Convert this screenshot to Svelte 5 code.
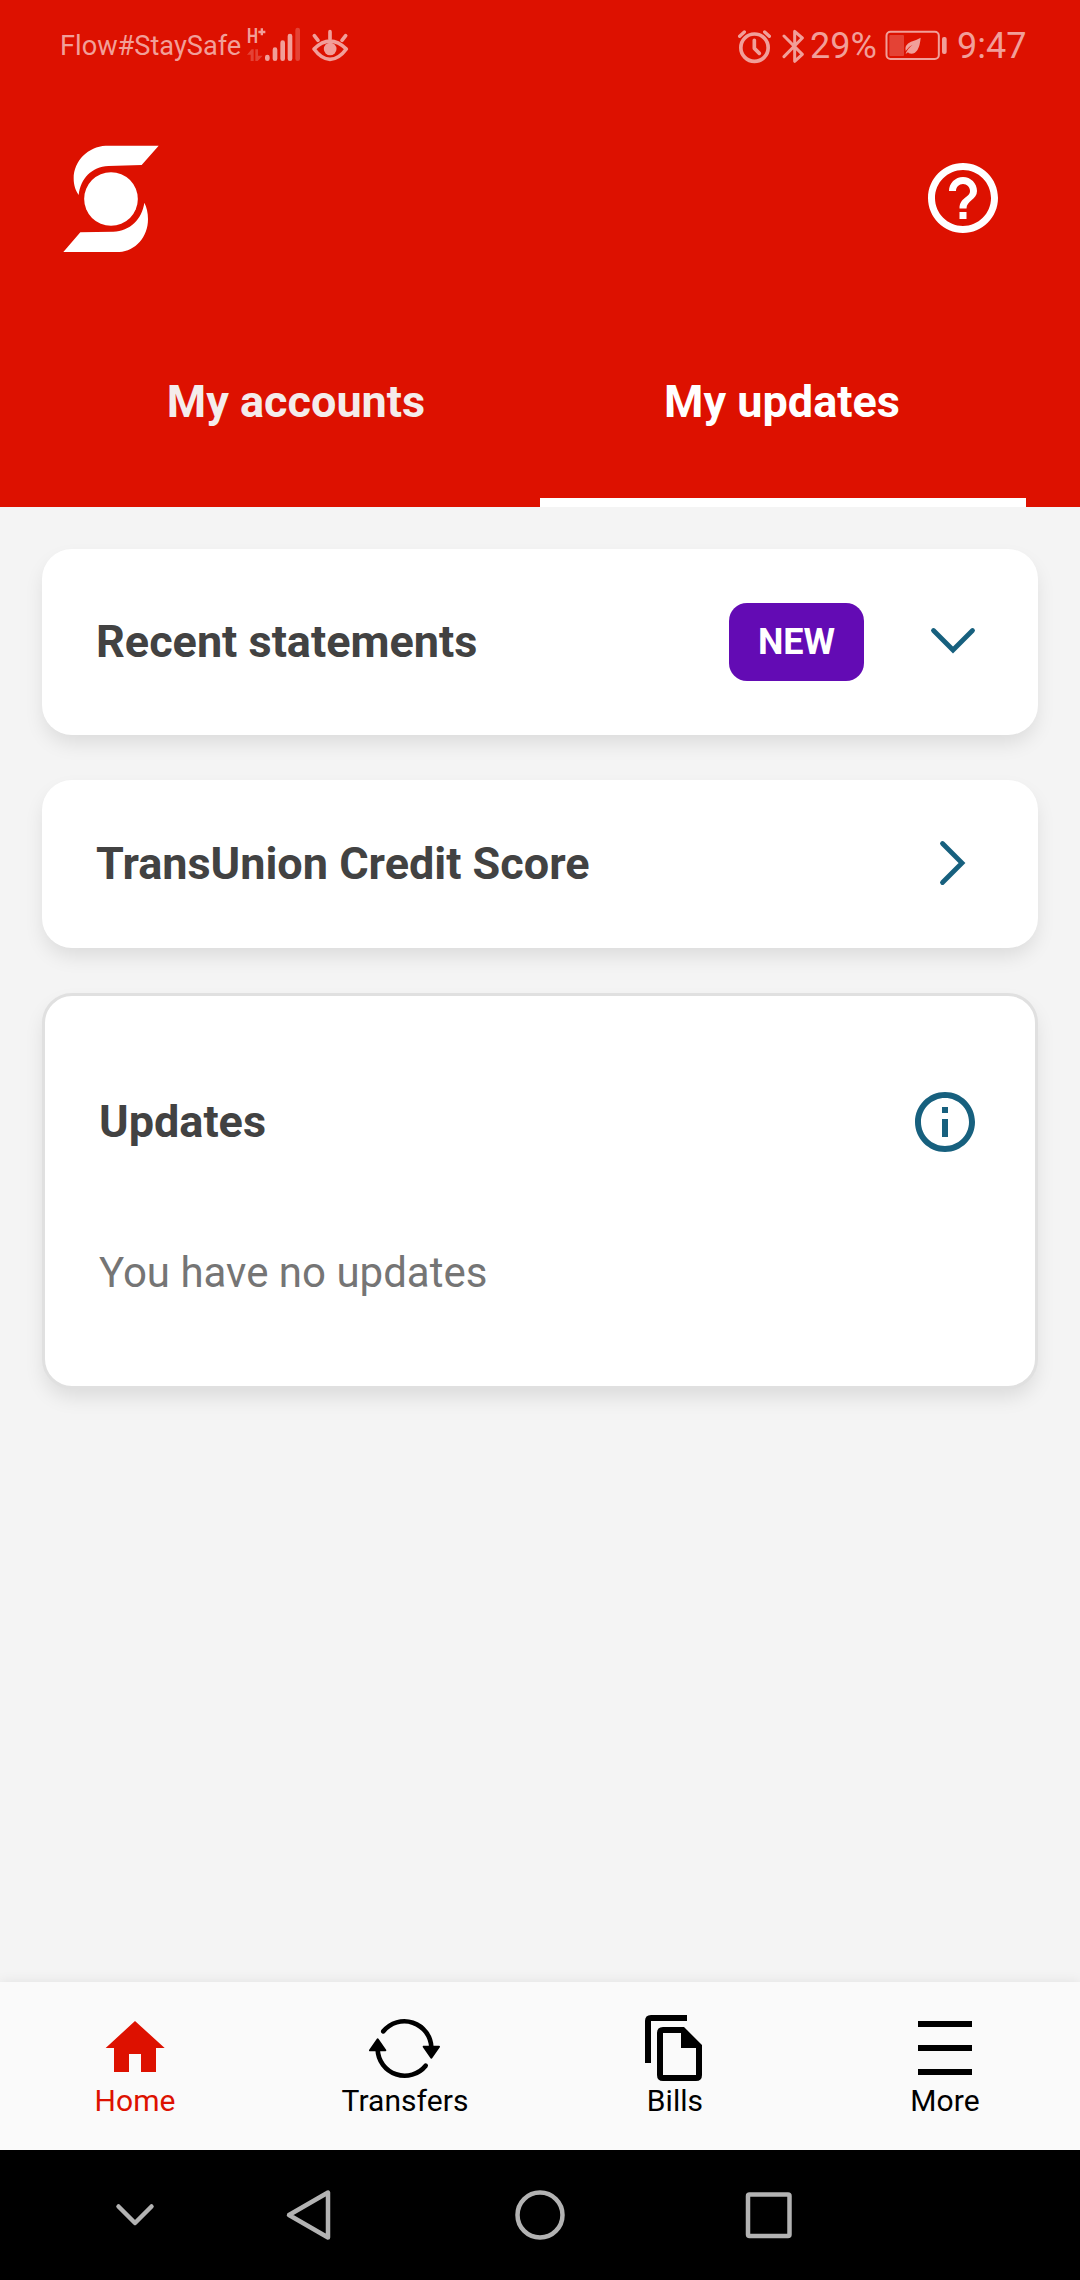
<script>
  const tabs = [
    { label: 'My accounts', active: false },
    { label: 'My updates', active: true }
  ];
</script>

<div class="screen">
  <header>
    <div class="status">
      <span class="carrier">Flow#StaySafe</span>
      <svg class="signal" viewBox="618 36 165 132">
        <text x="0" y="0" transform="translate(621 98) scale(.78 1)" font-size="60" font-weight="700">H</text>
        <path d="M655 66h21M665.500 55v21" stroke="currentColor" stroke-width="7" />
        <path class="dim" d="M621 134l14-16h6v35h-9v-19zM646 118h8v19h14l-15 16h-7z" />
        <g stroke="currentColor" stroke-width="14" stroke-linecap="round">
          <path d="M682 141v5M705 119v27M728 98v48M750 78v68" />
          <path class="dim" d="M773 60v86" />
        </g>
      </svg>
      <svg class="eye" viewBox="813 57 114 99">
        <path d="M822 117Q870 70 919 117Q896 148 870 148Q845 148 822 117Z" fill="none" stroke="currentColor" stroke-width="11" stroke-linejoin="round" />
        <circle cx="870.500" cy="117" r="19" />
        <path d="M870 65v22M823 77l11 14M917 77l-11 14" stroke="currentColor" stroke-width="11" stroke-linecap="round" />
      </svg>
      <svg class="alarm" viewBox="51 54 105 105">
        <circle cx="103.500" cy="110" r="41" fill="none" stroke="currentColor" stroke-width="11" />
        <path d="M103 88v24l15 15" fill="none" stroke="currentColor" stroke-width="11" stroke-linecap="round" stroke-linejoin="round" />
        <path d="M59 76l14-13M148 76l-14-13" stroke="currentColor" stroke-width="10" stroke-linecap="round" />
      </svg>
      <svg class="bluetooth" viewBox="186 51 69 111">
        <path d="M192 75L247 130L224 151V61L247 81L192 137" fill="none" stroke="currentColor" stroke-width="9" stroke-linejoin="round" stroke-linecap="round" />
      </svg>
      <span class="percent">29%</span>
      <svg class="battery" viewBox="495 60 189 93">
        <rect x="499.500" y="65" width="157" height="82" rx="12" fill="none" stroke="currentColor" stroke-width="6" />
        <rect class="dim" x="508" y="75" width="44" height="63" rx="3" />
        <rect x="666" y="81" width="14" height="51" rx="6" />
        <path d="M602 83Q598 130 574 131Q565 131 564 127L557 132Q560 118 578 104Q566 109 557 123Q552 105 573 95Q588 91 602 83Z" />
      </svg>
      <span class="clock">9:47</span>
    </div>

    <div class="brand">
      <svg class="logo" viewBox="66 72 294 330">
        <path d="M197 77H356L305 135L205 138C155 141 122 175 116 225C107 212 101 197 101 175C101 122 145 80 197 77Z" />
        <circle cx="213" cy="237" r="80.500" />
        <path d="M70 396L121 337L220 335C270 333 306 298 313 248C320 262 324 277 324 297C324 352 286 393 238 396Z" />
      </svg>
      <svg class="help" viewBox="0 0 24 24">
        <path d="M11 18h2v-2h-2v2zm1-16C6.480 2 2 6.480 2 12s4.480 10 10 10 10-4.480 10-10S17.520 2 12 2zm0 18c-4.410 0-8-3.590-8-8s3.590-8 8-8 8 3.590 8 8-3.590 8-8 8zm0-14c-2.210 0-4 1.790-4 4h2c0-1.100.900-2 2-2s2 .900 2 2c0 2-3 1.750-3 5h2c0-2.250 3-2.500 3-5 0-2.210-1.790-4-4-4z" />
      </svg>
    </div>

    <div class="tabs">
      {#each tabs as tab}
        <div class="tab" class:active={tab.active}>{tab.label}</div>
      {/each}
    </div>
  </header>

  <main>
    <section class="card statements">
      <h2>Recent statements</h2>
      <span class="badge">NEW</span>
      <svg class="chevron" viewBox="0 0 48 48"><path d="M4.500 12.500L24 32L43.500 12.500" /></svg>
    </section>
    <section class="card score">
      <h2>TransUnion Credit Score</h2>
      <svg class="chevron" viewBox="0 0 48 48"><path d="M13.500 3.500L33 23L13.500 42.500" /></svg>
    </section>
    <section class="card updates">
      <div class="row">
        <h2>Updates</h2>
        <svg class="info" viewBox="0 0 24 24">
          <path d="M11 7h2v2h-2zm0 4h2v6h-2zm1-9C6.480 2 2 6.480 2 12s4.480 10 10 10 10-4.480 10-10S17.520 2 12 2zm0 18c-4.410 0-8-3.590-8-8s3.590-8 8-8 8 3.590 8 8-3.590 8-8 8z" />
        </svg>
      </div>
      <p>You have no updates</p>
    </section>
  </main>

  <nav>
    <div class="item current">
      <svg viewBox="117 126 216 216"><path d="M225 153L314 234H288V306H243V252H207V306H162V234H137Z" /></svg>
      <span>Home</span>
    </div>
    <div class="item">
      <svg viewBox="927 126 216 216">
        <g fill="none" stroke="currentColor" stroke-width="14" stroke-linecap="round">
          <path d="M970 184A81 81 0 0 1 1114 232" />
          <path d="M1097 287A81 81 0 0 1 953 239" />
        </g>
        <g stroke="currentColor" stroke-width="6" stroke-linejoin="round">
          <path d="M1091 230H1137L1114 263Z" />
          <path d="M930 241H976L953 208Z" />
        </g>
      </svg>
      <span>Transfers</span>
    </div>
    <div class="item">
      <svg viewBox="117 126 216 216">
        <path d="M135 279V153Q135 135 153 135H261V153H153V279Z" />
        <path fill-rule="evenodd" d="M189 171H252L306 225V315Q306 333 288 333H189Q171 333 171 315V189Q171 171 189 171ZM189 189V315H288V234H243V189Z" />
      </svg>
      <span>Bills</span>
    </div>
    <div class="item">
      <svg viewBox="927 126 216 216"><path d="M954 153h162v18H954zM954 225h162v18H954zM954 297h162v18H954z" /></svg>
      <span>More</span>
    </div>
  </nav>

  <footer>
    <svg viewBox="0 0 60 60"><path d="M13.500 21.500L30 38L46.500 21.500" /></svg>
    <svg viewBox="0 0 60 60"><path d="M10 30L49 7.500V52.500Z" /></svg>
    <svg viewBox="0 0 60 60"><circle cx="30" cy="30" r="22.500" /></svg>
    <svg viewBox="0 0 60 60"><rect x="9" y="9.500" width="41.500" height="41.500" rx="1.500" /></svg>
  </footer>
</div>

<style>
  :global(body) {
    margin: 0;
  }
  .screen {
    width: 1080px;
    height: 2280px;
    display: flex;
    flex-direction: column;
    background: #f4f4f4;
    font-family: Roboto, 'Liberation Sans', sans-serif;
    overflow: hidden;
  }
  svg {
    display: block;
    flex: none;
    fill: currentColor;
  }
  header {
    height: 507px;
    flex: none;
    background: #dd1100;
    color: #fff;
  }
  .status {
    height: 92px;
    box-sizing: border-box;
    padding-left: 60px;
    display: flex;
    align-items: center;
    color: #f19f99;
    white-space: nowrap;
  }
  .dim {
    opacity: 0.35;
  }
  .carrier {
    width: 186px;
    font-size: 27.2px;
  }
  .signal {
    width: 55px;
    height: 44px;
    margin-top: -4px;
    overflow: visible;
  }
  .eye {
    width: 38px;
    height: 33px;
    margin: -1px 0 0 10px;
  }
  .alarm {
    width: 35px;
    height: 35px;
    margin-left: 388px;
  }
  .bluetooth {
    width: 23px;
    height: 37px;
    margin-left: 10px;
  }
  .percent {
    width: 75px;
    margin-left: 5px;
    font-size: 36px;
  }
  .battery {
    width: 63px;
    height: 31px;
    margin-top: -1px;
  }
  .clock {
    margin-left: 9px;
    font-size: 36px;
  }
  .brand {
    height: 212px;
    box-sizing: border-box;
    padding: 0 75px 0 62px;
    display: flex;
    align-items: center;
    justify-content: space-between;
  }
  .logo {
    width: 98px;
    height: 110px;
    margin-top: 2px;
  }
  .help {
    width: 84px;
    height: 84px;
  }
  .tabs {
    height: 203px;
    padding: 0 54px;
    display: grid;
    grid-template-columns: 1fr 1fr;
  }
  .tab {
    box-sizing: border-box;
    height: 203px;
    padding-right: 2px;
    border-bottom: 9px solid transparent;
    line-height: 196px;
    text-align: center;
    font-size: 45px;
    font-weight: 700;
    color: #f4eceb;
  }
  .tab.active {
    color: #fff;
    border-bottom-color: #fff;
  }
  main {
    flex: 1;
    padding: 42px 42px 0;
    display: flex;
    flex-direction: column;
    gap: 45px;
  }
  .card {
    box-sizing: border-box;
    border-radius: 30px;
    background: #fff;
    box-shadow: 0 10px 20px -2px rgba(0, 0, 0, 0.1);
    display: flex;
    align-items: center;
    padding: 0 61px 0 54px;
  }
  h2 {
    flex: 1;
    margin: 0;
    font-size: 45px;
    font-weight: 700;
    color: #424242;
    line-height: 54px;
  }
  .statements {
    height: 186px;
  }
  .score {
    height: 168px;
  }
  .badge {
    width: 135px;
    height: 78px;
    margin-right: 65px;
    border-radius: 18px;
    background: #630bb4;
    color: #fff;
    text-align: center;
    line-height: 78px;
    font-size: 36px;
    font-weight: 700;
  }
  .chevron {
    width: 48px;
    height: 48px;
    fill: none;
    stroke: #17607e;
    stroke-width: 4.8;
    stroke-linecap: round;
    stroke-linejoin: miter;
  }
  .updates {
    height: 396px;
    display: block;
    border: 3px solid #e0e0e0;
    padding: 90px 54px 0;
  }
  .row {
    height: 72px;
    display: flex;
    align-items: center;
  }
  .info {
    width: 72px;
    height: 72px;
    color: #17607e;
  }
  p {
    margin: 88px 0 0;
    line-height: 54px;
    font-size: 42px;
    color: #757575;
  }
  nav {
    height: 168px;
    flex: none;
    background: #fafafa;
    box-shadow: 0 0 12px rgba(0, 0, 0, 0.08);
    display: grid;
    grid-template-columns: repeat(4, 1fr);
  }
  .item {
    padding-top: 30px;
    display: flex;
    flex-direction: column;
    align-items: center;
    color: #000;
    font-size: 30px;
    line-height: 34px;
    letter-spacing: 0.05px;
  }
  .item svg {
    width: 72px;
    height: 72px;
  }
  .current {
    color: #dd1100;
  }
  footer {
    height: 130px;
    flex: none;
    box-sizing: border-box;
    padding-left: 105px;
    background: #000;
    display: flex;
    align-items: center;
  }
  footer svg {
    width: 60px;
    height: 60px;
    fill: none;
    stroke: #b3b3b3;
    stroke-width: 4.5;
    stroke-linecap: round;
    stroke-linejoin: round;
  }
  footer svg:nth-child(2) {
    margin-left: 114px;
  }
  footer svg:nth-child(3) {
    margin-left: 171px;
  }
  footer svg:nth-child(4) {
    margin-left: 169px;
  }
</style>
